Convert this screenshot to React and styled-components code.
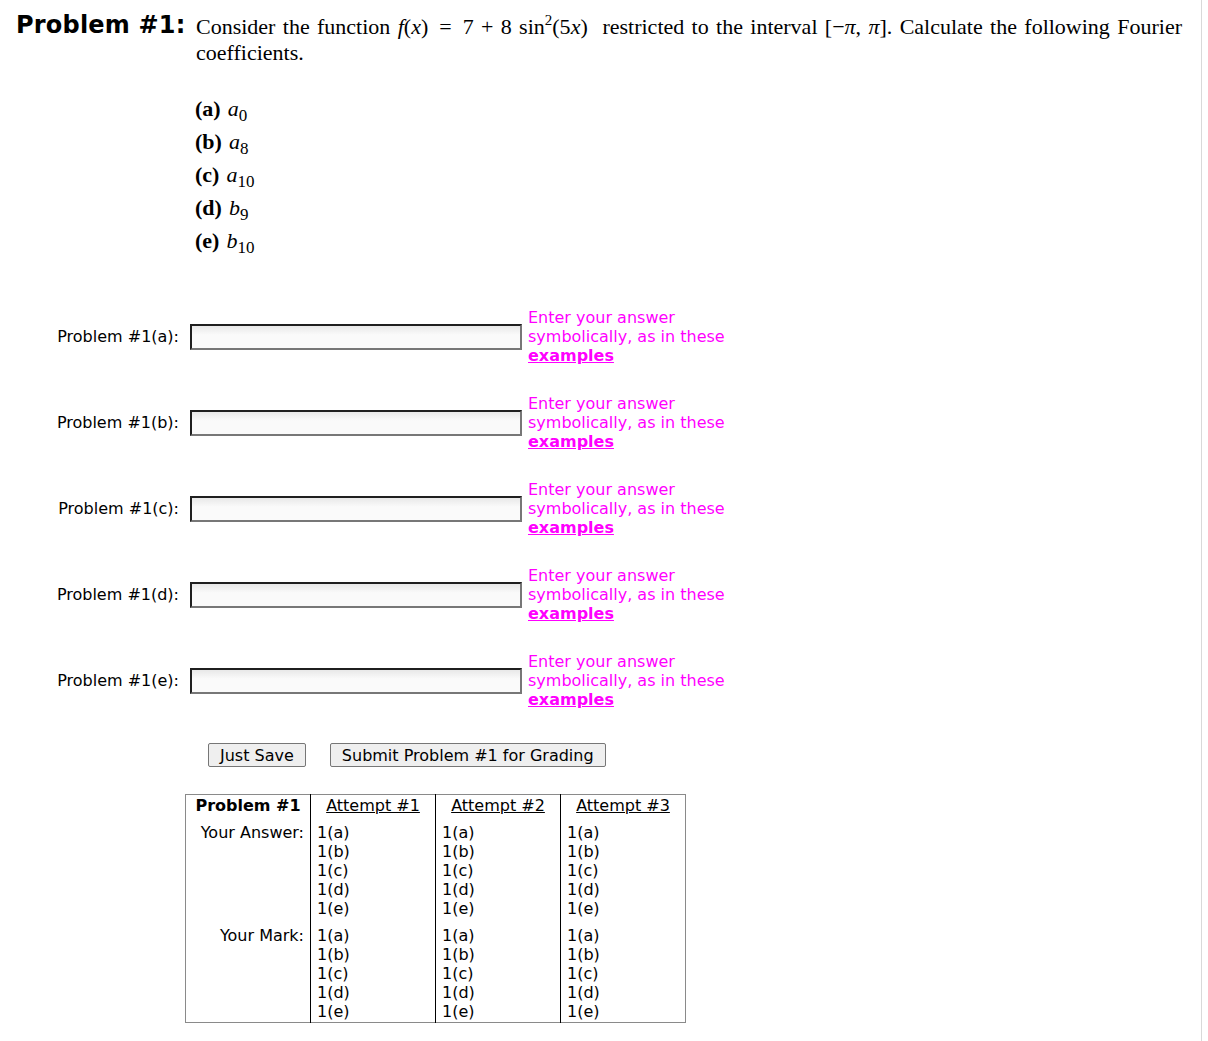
import React from "react";
import styled, { createGlobalStyle } from "styled-components";

const Global = createGlobalStyle`
  html, body { margin: 0; padding: 0; background: #fff; }
  body { font-family: "DejaVu Sans", sans-serif; color: #000; }
`;

const Page = styled.div`
  width: 1202px;
  min-height: 1041px;
  border-right: 1px solid #d9d9d9;
  box-sizing: border-box;
  padding: 9px 19px 0 16px;
`;

const Header = styled.div`
  display: flex;
  align-items: flex-start;
`;

const Title = styled.div`
  width: 180px;
  flex: none;
  font-family: "DejaVu Sans", sans-serif;
  font-weight: bold;
  font-size: 24px;
  line-height: 32px;
  letter-spacing: 0.2px;
`;

const Statement = styled.div`
  flex: 1;
  font-family: "Liberation Serif", serif;
  font-size: 22px;
  line-height: 26px;
  text-align: justify;
  padding-top: 5px;
`;

const I = styled.i`
  font-family: "Liberation Serif", serif;
`;

const Sup = styled.sup`
  font-size: 15px;
  vertical-align: 9px;
  line-height: 0;
`;

const Sub = styled.sub`
  font-size: 17px;
  vertical-align: -5px;
  line-height: 0;
  font-style: normal;
`;

const Op = styled.span`
  margin: 0 11px;
`;

const PartList = styled.ol`
  list-style: none;
  margin: 26px 0 0 179px;
  padding: 0;
  font-family: "Liberation Serif", serif;
  font-size: 22px;
  line-height: 33px;
`;

const PartLabel = styled.b`
  margin-right: 7px;
`;

const Answers = styled.div`
  margin-top: 51px;
  display: flex;
  flex-direction: column;
  gap: 29px;
`;

const AnswerRow = styled.div`
  display: grid;
  grid-template-columns: 174px 338px auto;
  align-items: center;
`;

const Label = styled.label`
  text-align: right;
  font-size: 16px;
  padding-right: 11px;
  white-space: nowrap;
`;

const Field = styled.input`
  width: 332px;
  height: 26px;
  box-sizing: border-box;
  margin: 0;
  border-style: solid;
  border-width: 2px;
  border-color: #1f1f1f #777 #777 #1f1f1f;
  background: linear-gradient(#e8e8e8, #fafafa 40%, #fafafa);
  font-size: 16px;
`;

const Hint = styled.div`
  color: #ff00ff;
  font-size: 16px;
  line-height: 19px;
  width: 215px;
`;

const HintLink = styled.a`
  color: #ff00ff;
  font-weight: bold;
  text-decoration: underline;
`;

const Buttons = styled.div`
  margin: 34px 0 0 192px;
  display: flex;
  gap: 24px;
`;

const Button = styled.button`
  font-family: "DejaVu Sans", sans-serif;
  font-size: 16px;
  height: 24px;
  padding: 0 11px;
  background: #efefef;
  border: 1px solid #767676;
  border-radius: 2px;
  color: #000;
`;

const Table = styled.table`
  margin: 27px 0 0 169px;
  border-collapse: collapse;
  border: 1px solid #8a8a8a;
  font-size: 16px;
`;

const Th = styled.th`
  width: 124px;
  padding: 1px 0 0;
  font-weight: ${(p) => (p.$first ? "bold" : "normal")};
  text-align: center;
  border-left: ${(p) => (p.$first ? "none" : "1px solid #000")};
  line-height: 20px;
  white-space: nowrap;
`;

const AttemptLink = styled.a`
  color: #000;
  text-decoration: underline;
`;

const RowLabel = styled.td`
  text-align: right;
  vertical-align: top;
  padding: 7px 6px 1px 0;
  line-height: 19px;
  white-space: nowrap;
`;

const Cell = styled.td`
  border-left: 1px solid #000;
  vertical-align: top;
  padding: 7px 6px 1px 6px;
  line-height: 19px;
`;

const parts = [
  ["(a)", "a", "0"],
  ["(b)", "a", "8"],
  ["(c)", "a", "10"],
  ["(d)", "b", "9"],
  ["(e)", "b", "10"],
];
const letters = ["a", "b", "c", "d", "e"];

function Items() {
  return letters.map((l) => <div key={l}>1({l})</div>);
}

export default function App() {
  return (
    <>
      <Global />
      <Page>
        <Header>
          <Title>Problem #1:</Title>
          <Statement>
            Consider the function <I>f</I>(<I>x</I>)<Op>=</Op>7 + 8 sin<Sup>2</Sup>(5<I>x</I>) &nbsp;restricted to the interval [−<I>π</I>, <I>π</I>]. Calculate the following Fourier coefficients.
          </Statement>
        </Header>
        <PartList>
          {parts.map(([p, v, s]) => (
            <li key={p}>
              <PartLabel>{p}</PartLabel>
              <I>{v}</I>
              <Sub>{s}</Sub>
            </li>
          ))}
        </PartList>
        <Answers>
          {letters.map((l) => (
            <AnswerRow key={l}>
              <Label>Problem #1({l}):</Label>
              <Field type="text" />
              <Hint>
                Enter your answer symbolically, as in these <HintLink href="#">examples</HintLink>
              </Hint>
            </AnswerRow>
          ))}
        </Answers>
        <Buttons>
          <Button>Just Save</Button>
          <Button>Submit Problem #1 for Grading</Button>
        </Buttons>
        <Table>
          <thead>
            <tr>
              <Th $first>Problem #1</Th>
              <Th><AttemptLink href="#">Attempt #1</AttemptLink></Th>
              <Th><AttemptLink href="#">Attempt #2</AttemptLink></Th>
              <Th><AttemptLink href="#">Attempt #3</AttemptLink></Th>
            </tr>
          </thead>
          <tbody>
            <tr>
              <RowLabel>Your Answer:</RowLabel>
              <Cell><Items /></Cell>
              <Cell><Items /></Cell>
              <Cell><Items /></Cell>
            </tr>
            <tr>
              <RowLabel>Your Mark:</RowLabel>
              <Cell><Items /></Cell>
              <Cell><Items /></Cell>
              <Cell><Items /></Cell>
            </tr>
          </tbody>
        </Table>
      </Page>
    </>
  );
}
